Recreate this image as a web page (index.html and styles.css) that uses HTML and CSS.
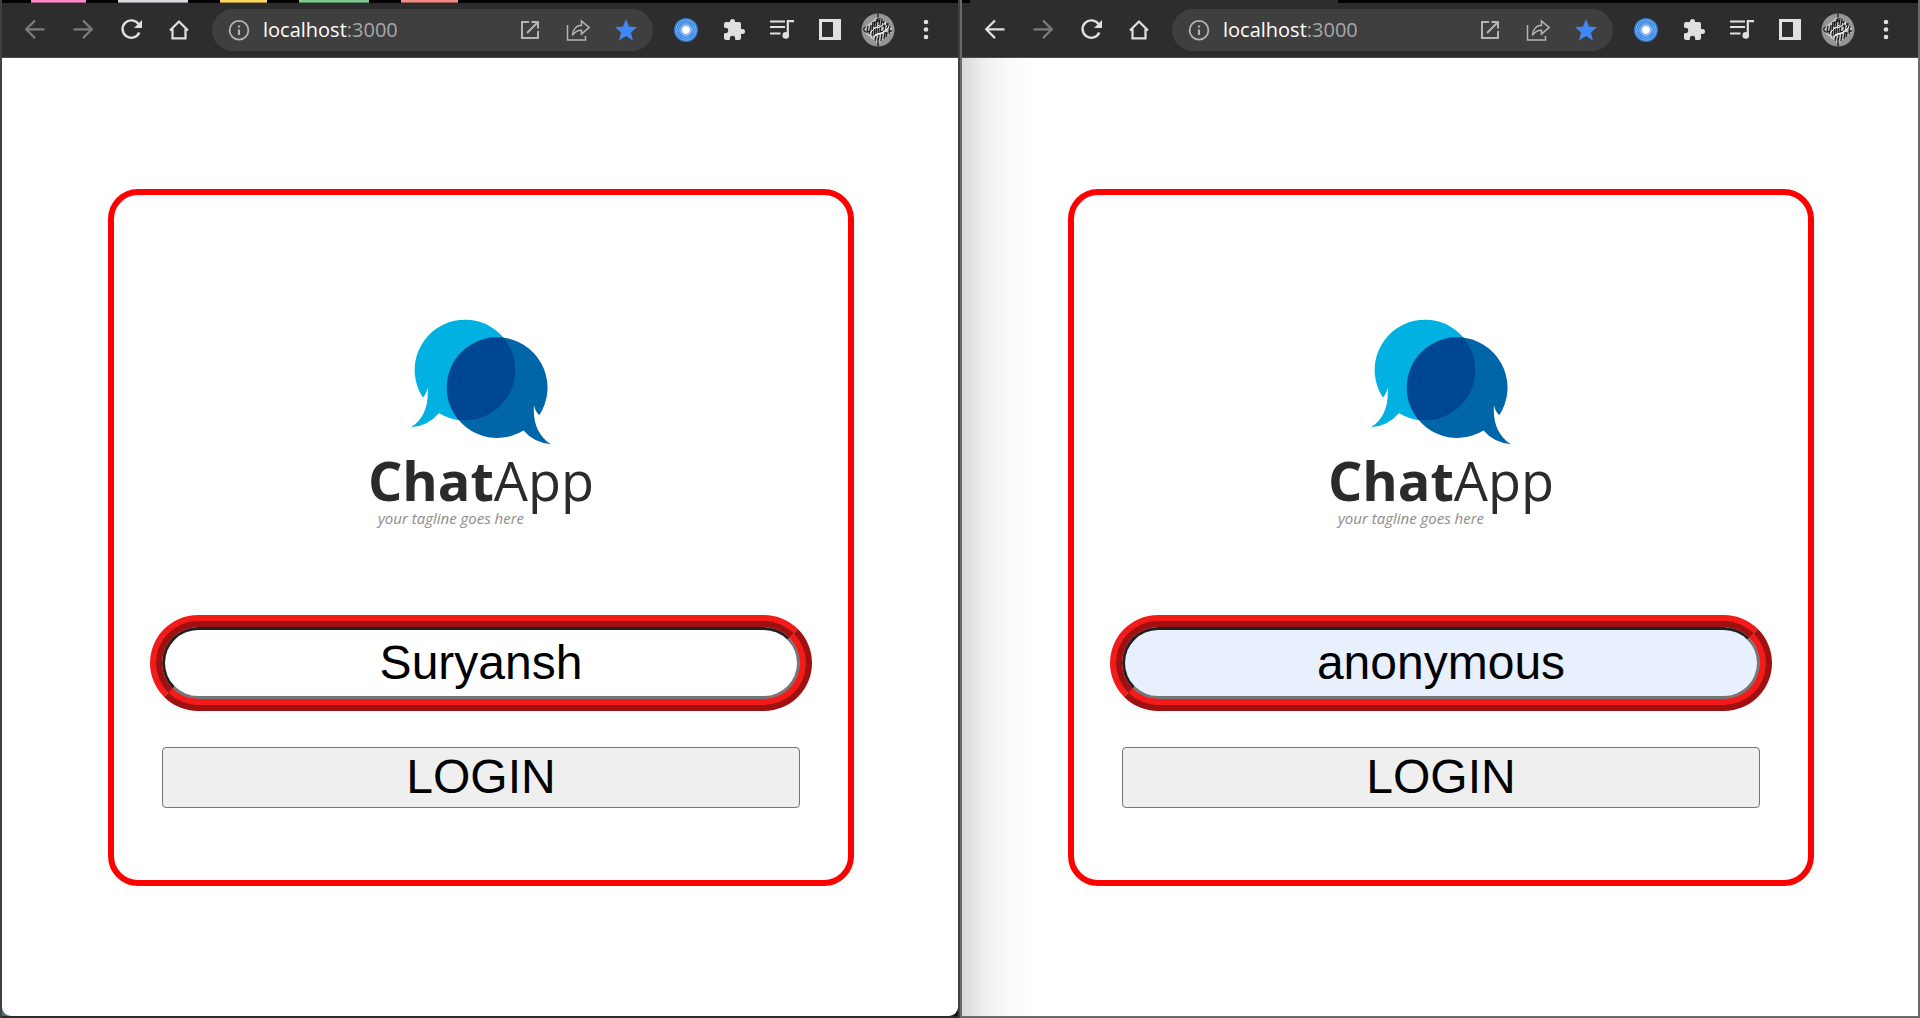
FILE: index.html
```html
<!DOCTYPE html>
<html lang="en">
<head>
<meta charset="utf-8">
<meta name="viewport" content="width=device-width, initial-scale=1">
<title>ChatApp</title>
<link rel="stylesheet" href="styles.css">
</head>
<body>
<svg class="sprite" width="0" height="0" aria-hidden="true">
  <symbol id="back" viewBox="0 0 24 24"><path d="M21.500 11.300H3M12 2.500L3.200 11.300L12 20.100" fill="none" stroke="currentColor" stroke-width="2.200"/></symbol>
  <symbol id="forward" viewBox="0 0 24 24"><path d="M2.500 11.300H21M12 2.500L20.800 11.300L12 20.100" fill="none" stroke="currentColor" stroke-width="2.200"/></symbol>
  <symbol id="reload" viewBox="0 0 24 24"><path d="M19.500 6.200A8.700 8.700 0 1 0 20.300 14.500" fill="none" stroke="currentColor" stroke-width="2.400"/><path d="M23 2V10H15Z" fill="currentColor"/></symbol>
  <symbol id="home" viewBox="0 0 24 24"><path d="M3 12.500L12 3.500L21 12.500M5.500 11V20.300H18.500V11" fill="none" stroke="currentColor" stroke-width="2.200"/></symbol>
  <symbol id="info" viewBox="0 0 24 24"><circle cx="12" cy="12.300" r="9.400" fill="none" stroke="currentColor" stroke-width="1.800"/><path d="M12 11.500V17M12 7.400V9.600" stroke="currentColor" stroke-width="2.200"/></symbol>
  <symbol id="open" viewBox="0 0 24 24"><path d="M11 4H4V20H20V13M13.500 4H20V10.500M20 4L9 15" fill="none" stroke="currentColor" stroke-width="2"/></symbol>
  <symbol id="share" viewBox="0 0 24 24"><path d="M1.500 7V22H19.500V18M6.500 17.500C7 11 10 7.500 15.500 7.200V3L23 9.500L15.500 16V12.200C11 12.200 8.500 14 6.500 17.500Z" fill="none" stroke="currentColor" stroke-width="1.500"/></symbol>
  <symbol id="star" viewBox="0 0 24 24"><path d="M12 1L15 8.600L23 9.200L16.900 14.400L19 22.500L12 18L5 22.500L7.100 14.400L1 9.200L9 8.600Z" fill="currentColor"/></symbol>
  <symbol id="rings" viewBox="0 0 24 24">
    <radialGradient id="glow"><stop offset=".45" stop-color="#fff"/><stop offset="1" stop-color="#fff" stop-opacity="0"/></radialGradient>
    <circle cx="12" cy="12" r="12" fill="#2b7bdb"/><g fill="none" stroke="#9cc4f2" stroke-width=".8"><circle cx="12" cy="12" r="10.200"/><circle cx="12" cy="12" r="8.300"/><circle cx="12" cy="12" r="6.400"/></g><circle cx="12" cy="12" r="6.500" fill="url(#glow)"/>
  </symbol>
  <symbol id="puzzle" viewBox="0 0 24 24"><path d="M20.500 11H19V6Q19 4 17 4H13V3.500A2.500 2.500 0 0 0 8 3.500V4H4Q2 4 2 6V9.800H3.500A2.700 2.700 0 0 1 3.500 15.200H2V20Q2 22 4 22H7.800V20.500A2.700 2.700 0 0 1 13.200 20.500V22H17Q19 22 19 20V16H20.500A2.500 2.500 0 0 0 20.500 11Z" fill="currentColor"/></symbol>
  <symbol id="music" viewBox="0 0 24 24"><path d="M0 3.500H15M0 9H15M0 15.500H10.500M17.800 17V3.200H24" fill="none" stroke="currentColor" stroke-width="2.200"/><circle cx="15.800" cy="17.400" r="3.300" fill="currentColor"/></symbol>
  <symbol id="panel" viewBox="0 0 24 24"><path fill-rule="evenodd" d="M1 1H23V22H1ZM4 4V19H15V4Z" fill="currentColor"/></symbol>
  <symbol id="dots" viewBox="0 0 24 24"><g fill="currentColor"><circle cx="12" cy="4" r="2.300"/><circle cx="12" cy="11.500" r="2.300"/><circle cx="12" cy="19" r="2.300"/></g></symbol>
  <symbol id="avatar" viewBox="0 0 34 34">
    <circle cx="17" cy="17" r="16.500" fill="#959595"/>
    <path d="M17 3L31 15V19L17 31L3 19V15Z" fill="#c4c4c4"/>
    <path d="M17 0.500V9M17 25V33.500M5 14Q2 15 3 17T5 19M7 13L6 19L9 18L10 12M12 9L11 17M12 10L14 9L13 14M16 6L15 14M19 5L18 12M21 6L20 13M21 9L23 9L22 14M8 21L9 17M11 22L12 17L14 16L13 23M16 14L15 21M18 13L17 20M20 13L19 19L22 18M24 12L23 18M25 11L27 11L26 16M29 13L28 18L31 18M11 25L12 22M14 28L15 23M17 28L18 22M20 28L21 21M23 26L24 20L26 20L25 24M28 21L29 17" fill="none" stroke="#1c1c1c" stroke-width="1.300"/>
    <path d="M9 20L14 15L19 14L25 9M10 25L16 21L21 20L28 14" fill="none" stroke="#fff"/>
  </symbol>
  <symbol id="bubbles" viewBox="210 58 426 378">
    <clipPath id="overlap"><circle cx="375" cy="211" r="151"/></clipPath>
    <path d="M248.700 293.800A151 151 0 1 1 297.300 340.500Q262 380 213 383C250 360 267 320 263 263Q259 284 248.700 293.800Z" fill="#00b1e1"/>
    <path d="M550.700 392.500A151 151 0 1 1 597.900 346.600Q585 335 582 317C578 370 595 410 633 434Q580 428 550.700 392.500Z" fill="#0066a8"/>
    <circle cx="471.500" cy="264" r="151" fill="#004791" clip-path="url(#overlap)"/>
  </symbol>
</svg>
<div class="desktop">
  <section class="window window-back">
    <div class="tab-strip">
      <span class="group pink"></span><span class="group grey"></span><span class="group yellow"></span><span class="group green"></span><span class="group coral"></span>
    </div>
    <nav class="toolbar">
      <button class="tool" aria-label="Back" disabled><svg><use href="#back"/></svg></button>
      <button class="tool" aria-label="Forward" disabled><svg><use href="#forward"/></svg></button>
      <button class="tool" aria-label="Reload"><svg><use href="#reload"/></svg></button>
      <button class="tool" aria-label="Home"><svg><use href="#home"/></svg></button>
      <div class="address">
        <button class="tool muted" aria-label="Site information"><svg><use href="#info"/></svg></button>
        <span class="url">localhost<span class="port">:3000</span></span>
        <button class="tool muted" aria-label="Open in app"><svg><use href="#open"/></svg></button>
        <button class="tool muted" aria-label="Share"><svg><use href="#share"/></svg></button>
        <button class="tool starred" aria-label="Bookmark"><svg><use href="#star"/></svg></button>
      </div>
      <button class="tool" aria-label="Recorder"><svg><use href="#rings"/></svg></button>
      <button class="tool" aria-label="Extensions"><svg><use href="#puzzle"/></svg></button>
      <button class="tool" aria-label="Media"><svg><use href="#music"/></svg></button>
      <button class="tool" aria-label="Side panel"><svg><use href="#panel"/></svg></button>
      <button class="tool" aria-label="Profile"><svg class="avatar"><use href="#avatar"/></svg></button>
      <button class="tool" aria-label="Menu"><svg><use href="#dots"/></svg></button>
    </nav>
    <main class="page">
      <form class="card">
        <svg class="mark" aria-hidden="true"><use href="#bubbles"/></svg>
        <h1 class="brand"><strong>Chat</strong>App</h1>
        <p class="tagline">your tagline goes here</p>
        <input class="name" type="text" aria-label="Name" value="Suryansh">
        <button class="login" type="button">LOGIN</button>
      </form>
    </main>
  </section>
  <section class="window window-front">
    <div class="tab-strip"><span class="active-tab"></span></div>
    <nav class="toolbar">
      <button class="tool" aria-label="Back"><svg><use href="#back"/></svg></button>
      <button class="tool" aria-label="Forward" disabled><svg><use href="#forward"/></svg></button>
      <button class="tool" aria-label="Reload"><svg><use href="#reload"/></svg></button>
      <button class="tool" aria-label="Home"><svg><use href="#home"/></svg></button>
      <div class="address">
        <button class="tool muted" aria-label="Site information"><svg><use href="#info"/></svg></button>
        <span class="url">localhost<span class="port">:3000</span></span>
        <button class="tool muted" aria-label="Open in app"><svg><use href="#open"/></svg></button>
        <button class="tool muted" aria-label="Share"><svg><use href="#share"/></svg></button>
        <button class="tool starred" aria-label="Bookmark"><svg><use href="#star"/></svg></button>
      </div>
      <button class="tool" aria-label="Recorder"><svg><use href="#rings"/></svg></button>
      <button class="tool" aria-label="Extensions"><svg><use href="#puzzle"/></svg></button>
      <button class="tool" aria-label="Media"><svg><use href="#music"/></svg></button>
      <button class="tool" aria-label="Side panel"><svg><use href="#panel"/></svg></button>
      <button class="tool" aria-label="Profile"><svg class="avatar"><use href="#avatar"/></svg></button>
      <button class="tool" aria-label="Menu"><svg><use href="#dots"/></svg></button>
    </nav>
    <main class="page">
      <form class="card">
        <svg class="mark" aria-hidden="true"><use href="#bubbles"/></svg>
        <h1 class="brand"><strong>Chat</strong>App</h1>
        <p class="tagline">your tagline goes here</p>
        <input class="name autofilled" type="text" aria-label="Name" value="anonymous">
        <button class="login" type="button">LOGIN</button>
      </form>
    </main>
  </section>
</div>
</body>
</html>
```
FILE: styles.css
```css
* {
  box-sizing: border-box;
}

body {
  margin: 0;
  background: #000;
}

.sprite {
  position: absolute;
}

.desktop {
  display: grid;
  grid-template-columns: 1fr 1fr;
  min-height: 100vh;
}

.window {
  display: flex;
  flex-direction: column;
  min-width: 0;
  border: 2px solid #414141;
  border-top: 0;
}

.window-back {
  border-bottom-color: #2b2b2e;
  background: linear-gradient(to right, #427174 50%, #111 50%);
}

.window-front {
  border-color: #6a6a6a;
}

/* Tab strip: only its lowest pixels are in view */
.tab-strip {
  display: flex;
  height: 3px;
  padding-left: 29px;
  gap: 32px;
  background: #000;
}

.group {
  width: 70px;
  border-bottom: 1px solid rgb(0 0 0 / 35%);
}

.pink {
  width: 55px;
  background-color: #ff8bcb;
}

.grey {
  background-color: #dadce0;
}

.yellow {
  width: 47px;
  background-color: #fdd663;
}

.green {
  background-color: #81c995;
}

.coral {
  width: 57px;
  background-color: #f28b82;
}

.window-front .tab-strip {
  padding-left: 8px;
}

.active-tab {
  width: 368px;
  background: #2d2d2d;
}

.toolbar {
  display: flex;
  align-items: center;
  height: 55px;
  padding: 0 8px 0 9px;
  border-bottom: 1px solid #4c494c;
  background: #2d2d2d;
}

.tool {
  display: flex;
  flex: none;
  align-items: center;
  justify-content: center;
  width: 48px;
  height: 42px;
  padding: 0;
  border: 0;
  background: none;
  color: #e0e0e0;
}

.tool:disabled {
  color: #7c7c7c;
}

.tool svg {
  width: 24px;
  height: 24px;
}

.tool .avatar {
  width: 34px;
  height: 34px;
}

.tool.muted {
  color: #b4b4b8;
}

.tool.starred {
  color: #4285f4;
}

.address {
  display: flex;
  flex: 1;
  align-items: center;
  min-width: 0;
  margin: 0 9px;
  padding: 0 3px;
  border-radius: 21px;
  background: #3f3f3f;
}

.url {
  flex: 1;
  font: 20px/24px "Open Sans", "Noto Sans", sans-serif;
  color: #fff;
}

.port {
  color: #a8a8a8;
}

.page {
  flex: 1;
  padding: 131px 104px 96px 106px;
  background: #fff;
}

.window-back .page {
  border-radius: 0 0 9px 9px;
}

.window-front .page {
  background: linear-gradient(to right, #d8d8d8 0, #efefef 22px, #fafafa 46px, #fff 76px);
}

.card {
  display: flex;
  flex-direction: column;
  padding: 124px 48px 72px;
  border: 6px solid #f00;
  border-radius: 30px;
}

.mark {
  align-self: center;
  width: 142px;
  height: 126px;
}

.brand {
  margin: 5px 0 0;
  font: 400 54px/60px "Open Sans", "Noto Sans", sans-serif;
  text-align: center;
  color: #2b2b2b;
}

.brand strong {
  font-weight: 700;
}

.tagline {
  margin: 0;
  padding-right: 60px;
  font: italic 15px/16px "Open Sans", "Noto Sans", sans-serif;
  text-align: center;
  color: #8c8c8c;
}

.name {
  width: 100%;
  height: 72px;
  margin: 101px 0 48px;
  padding: 0 12px 2px;
  border: 3px inset #767676;
  border-radius: 36px;
  outline: 12px ridge #f31a1a;
  background: #fff;
  font: 48px/56px "Liberation Sans", Arial, sans-serif;
  text-align: center;
  color: #000;
}

.autofilled {
  background: #e8f0fe;
}

.login {
  height: 61px;
  padding: 0 0 2px;
  border: 1px solid #767676;
  border-radius: 4px;
  background: #efefef;
  font: 48px/56px "Liberation Sans", Arial, sans-serif;
  color: #000;
}
```
